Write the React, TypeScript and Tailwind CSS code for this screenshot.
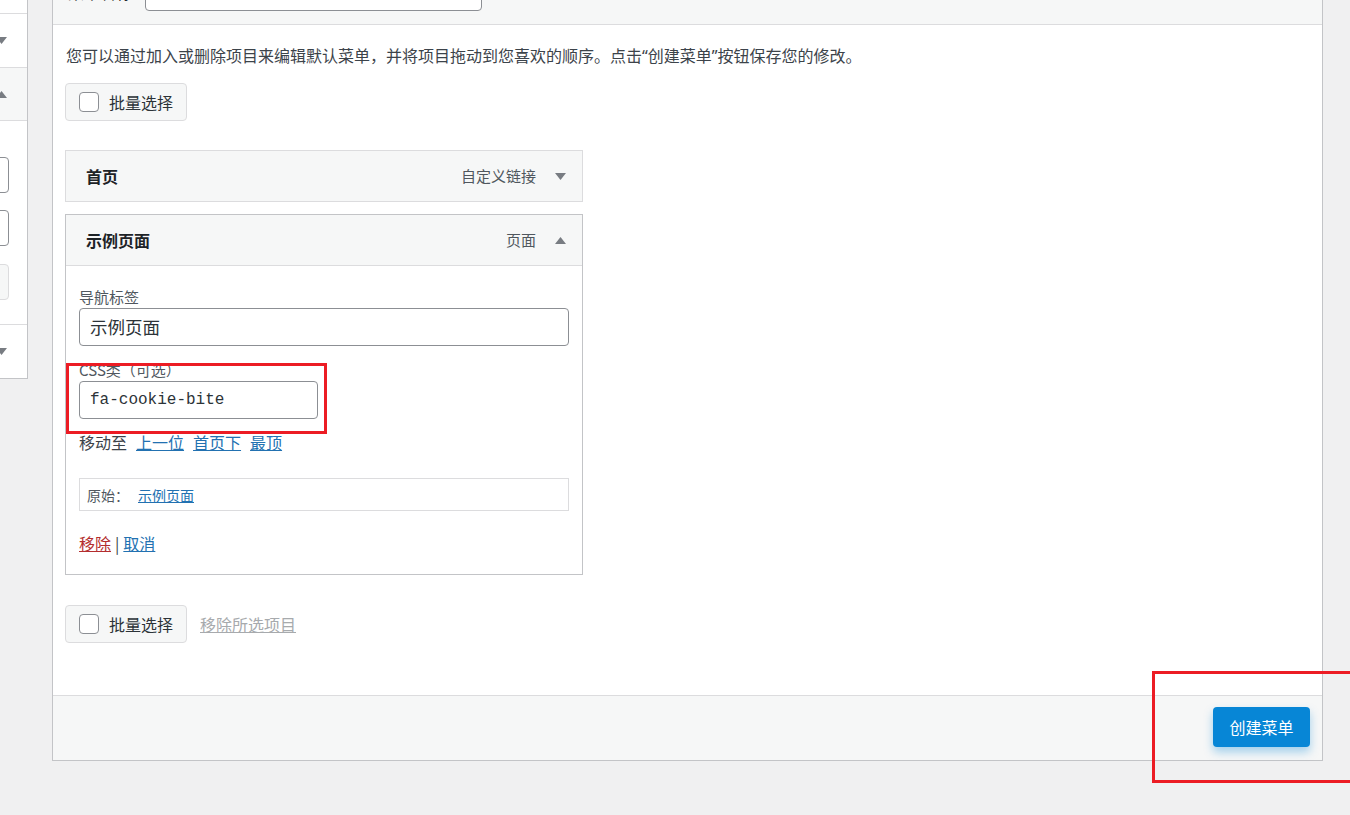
import React from 'react';

const font = "font-['Noto_Sans_CJK_SC','Noto_Sans',sans-serif]";

function Arrow({ up = false }: { up?: boolean }) {
  return (
    <svg width="11" height="7" viewBox="0 0 11 7" className="shrink-0">
      {up ? (
        <polygon points="0,7 11,7 5.5,0" fill="#787c82" />
      ) : (
        <polygon points="0,0 11,0 5.5,7" fill="#787c82" />
      )}
    </svg>
  );
}

function Checkbox() {
  return <span className="w-[20px] h-[20px] rounded-[4px] border border-[#8c8f94] bg-white shrink-0" />;
}

function BulkSelect() {
  return (
    <div className="flex items-center gap-[10px] w-[122px] h-[38px] pl-[13px] bg-[#f6f7f7] border border-[#dcdcde] rounded-[4px]">
      <Checkbox />
      <span className="text-[16px] leading-[20px] text-[#2c3338]">批量选择</span>
    </div>
  );
}

function Sidebar() {
  return (
    <div className="w-[28px] shrink-0 self-start overflow-hidden">
      <div className="w-[300px] ml-[-272px] bg-white border-r border-[#c3c4c7]">
        <div className="h-[14px] border-b border-[#dcdcde]" />
        <div className="h-[54px] border-b border-[#dcdcde] flex items-center justify-end pr-[20px]">
          <Arrow />
        </div>
        <div className="h-[53px] bg-[#f6f7f7] border-b border-[#dcdcde] flex items-center justify-end pr-[20px]">
          <Arrow up />
        </div>
        <div className="h-[204px] border-b border-[#dcdcde] flex flex-col pt-[36px] pr-[18px]">
          <div className="h-[36px] border border-[#8c8f94] rounded-[4px] bg-white" />
          <div className="h-[36px] mt-[17px] border border-[#8c8f94] rounded-[4px] bg-white" />
          <div className="h-[36px] mt-[18px] border border-[#dcdcde] rounded-[4px] bg-[#f6f7f7]" />
        </div>
        <div className="h-[54px] border-b border-[#c3c4c7] flex items-center justify-end pr-[20px]">
          <Arrow />
        </div>
      </div>
    </div>
  );
}

function ItemHeader({ title, kind, open }: { title: string; kind: string; open?: boolean }) {
  return (
    <div className="h-[50px] flex items-center pl-[20px] pr-[16px] bg-[#f6f7f7]">
      <span className="text-[16px] leading-[20px] font-bold text-[#1d2327]">{title}</span>
      <span className="ml-auto text-[15px] leading-[20px] text-[#50575e]">{kind}</span>
      <span className="ml-[19px]">
        <Arrow up={open} />
      </span>
    </div>
  );
}

export default function App() {
  return (
    <div className={`relative w-[1350px] h-[815px] overflow-hidden bg-[#f0f0f1] flex ${font}`}>
      <Sidebar />

      <div className="ml-[24px] w-[1271px] self-start bg-white border-x border-b border-[#c3c4c7]">
        {/* menu name bar, mostly scrolled off */}
        <div className="h-[25px] bg-[#f6f7f7] border-b border-[#dcdcde] overflow-hidden">
          <div className="flex items-center h-[38px] mt-[-27px] pl-[15px]">
            <span className="w-[77px] text-[16px] leading-[20px] text-[#1d2327]">菜单名称</span>
            <div className="w-[337px] h-[38px] bg-white border border-[#8c8f94] rounded-[4px]" />
          </div>
        </div>

        <div className="pt-[18px] pl-[12px] pb-[52px]">
          <p className="ml-[1px] text-[16px] leading-[24px] text-[#3c434a]">
            您可以通过加入或删除项目来编辑默认菜单，并将项目拖动到您喜欢的顺序。点击
            <span className="font-['Noto_Sans',sans-serif]">“</span>创建菜单
            <span className="font-['Noto_Sans',sans-serif]">”</span>按钮保存您的修改。
          </p>

          <div className="mt-[15px]">
            <BulkSelect />
          </div>

          <div className="mt-[29px] w-[518px] border border-[#dcdcde]">
            <ItemHeader title="首页" kind="自定义链接" />
          </div>

          <div className="mt-[12px] w-[518px] border border-[#c3c4c7]">
            <div className="border-b border-[#dcdcde]">
              <ItemHeader title="示例页面" kind="页面" open />
            </div>
            <div className="pt-[21px] pl-[13px] pr-[13px] pb-[21px]">
              <label className="block text-[15px] leading-[20px] text-[#50575e]">导航标签</label>
              <div className="mt-[1px] h-[38px] flex items-center px-[10px] border border-[#8c8f94] rounded-[4px]">
                <span className="text-[17.5px] leading-[22px] text-[#2c3338]">示例页面</span>
              </div>

              <label className="block mt-[14px] text-[15px] leading-[20px] text-[#50575e]">CSS类（可选）</label>
              <div className="mt-[1px] w-[239px] h-[38px] flex items-center px-[10px] border border-[#8c8f94] rounded-[4px]">
                <span className="font-['Liberation_Mono',monospace] text-[16px] leading-[20px] text-[#2c3338]">
                  fa-cookie-bite
                </span>
              </div>

              <div className="mt-[13px] flex items-center gap-[9px] text-[16px] leading-[20px]">
                <span className="text-[#3c434a]">移动至</span>
                <a className="text-[#2271b1] underline">上一位</a>
                <a className="text-[#2271b1] underline">首页下</a>
                <a className="text-[#2271b1] underline">最顶</a>
              </div>

              <div className="mt-[26px] h-[33px] flex items-center pl-[7px] border border-[#dcdcde] text-[14px] leading-[20px]">
                <span className="w-[51px] text-[#50575e]">原始：</span>
                <a className="text-[#2271b1] underline">示例页面</a>
              </div>

              <div className="mt-[22px] text-[16px] leading-[20px]">
                <a className="text-[#b32d2e] underline">移除</a>
                <span className="text-[#3c434a] mx-[4px]">|</span>
                <a className="text-[#2271b1] underline">取消</a>
              </div>
            </div>
          </div>

          <div className="mt-[30px] flex items-center gap-[13px]">
            <BulkSelect />
            <a className="text-[16px] leading-[20px] text-[#a7aaad] underline">移除所选项目</a>
          </div>
        </div>

        <div className="border-t border-[#dcdcde] bg-[#f6f7f7] pt-[11px] pb-[13px] pr-[12px] flex justify-end">
          <button
            type="button"
            className="w-[97px] h-[40px] rounded-[4px] bg-[#0786d6] text-white text-[16px] leading-[20px] shadow-[0_5px_10px_rgba(7,134,214,0.35)]"
          >
            创建菜单
          </button>
        </div>
      </div>

      {/* annotation boxes */}
      <div className="absolute left-[66px] top-[363px] w-[261px] h-[71px] border-[3px] border-[#ec1c24]" />
      <div className="absolute left-[1152px] top-[671px] w-[210px] h-[112px] border-[3px] border-[#ec1c24]" />
    </div>
  );
}
